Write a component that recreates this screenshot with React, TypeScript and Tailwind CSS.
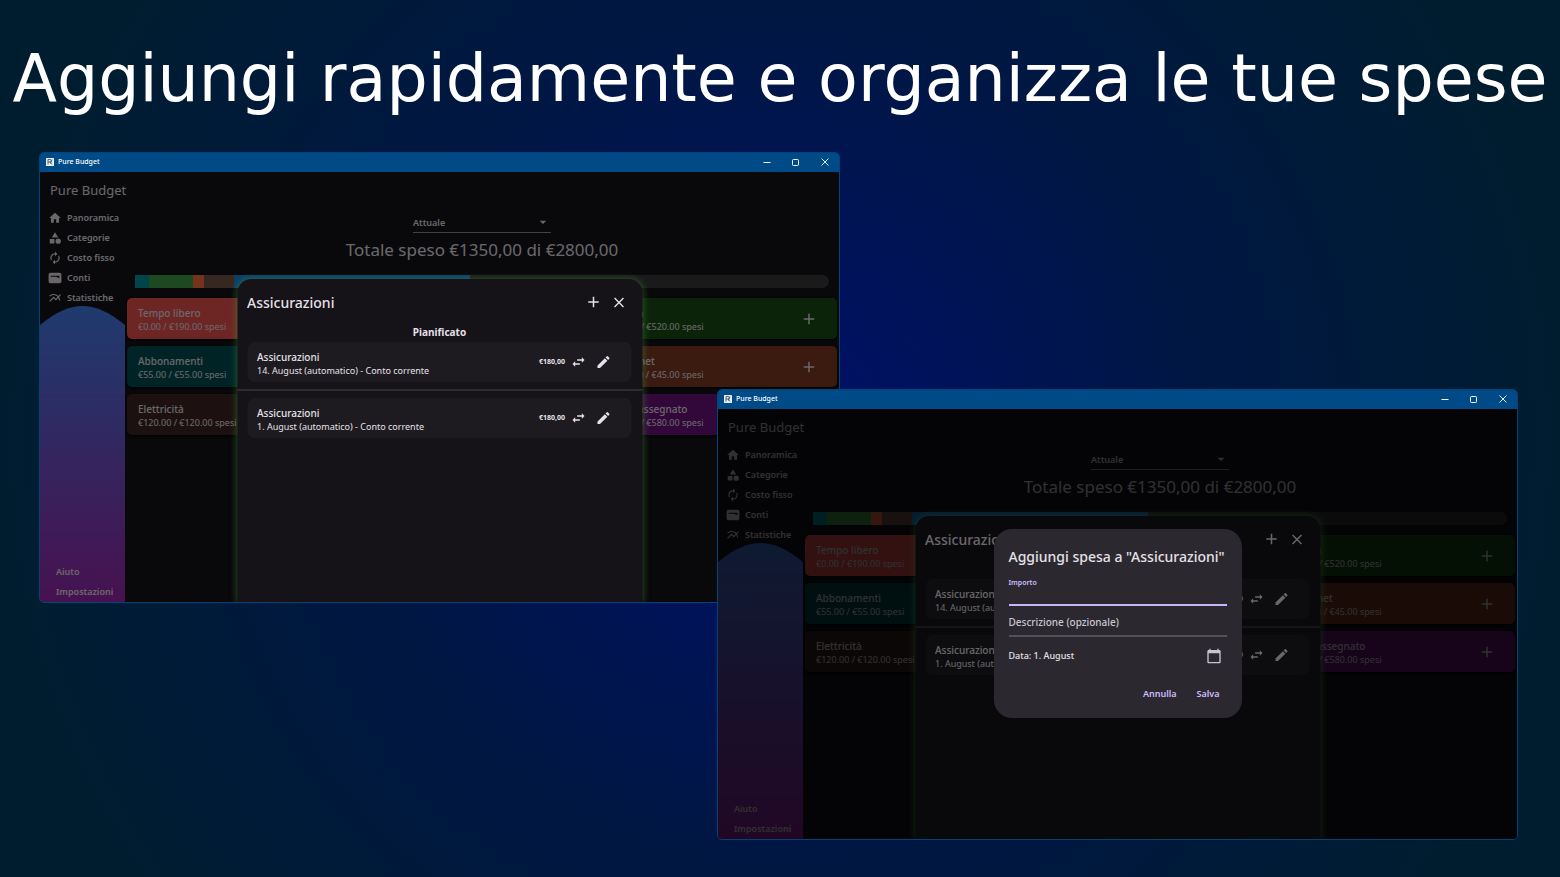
import type { ReactNode } from "react";
import { useId } from "react";
import {
  MdAdd,
  MdArrowDropDown,
  MdAutorenew,
  MdCalendarToday,
  MdCategory,
  MdClose,
  MdEdit,
  MdHome,
  MdMultilineChart,
  MdSwapHoriz,
} from "react-icons/md";

function AccountIcon({ className }: { className?: string }) {
  return (
    <svg viewBox="0 0 24 24" className={className} aria-hidden="true">
      <path
        fill="currentColor"
        fillRule="evenodd"
        d="M4 3h16a3 3 0 0 1 3 3v12a3 3 0 0 1-3 3H4a3 3 0 0 1-3-3V6a3 3 0 0 1 3-3ZM4.500 8v2h9.500l3 1.500h2.500V8Z"
      />
    </svg>
  );
}

const navItems = [
  { label: "Panoramica", Icon: MdHome },
  { label: "Categorie", Icon: MdCategory },
  { label: "Costo fisso", Icon: MdAutorenew },
  { label: "Conti", Icon: AccountIcon },
  { label: "Statistiche", Icon: MdMultilineChart },
];

const segments = [
  { color: "bg-[#0097a7]", width: 14 },
  { color: "bg-[#43a047]", width: 44 },
  { color: "bg-[#ff7043]", width: 11 },
  { color: "bg-[#795548]", width: 30 },
  { color: "bg-[#1e88e5]", width: 236 },
];
const barTotal = 694;

const leftCards = [
  { name: "Tempo libero", spent: "€0.00 / €190.00 spesi", color: "bg-[#ef5350]" },
  { name: "Abbonamenti", spent: "€55.00 / €55.00 spesi", color: "bg-[#005054]" },
  { name: "Elettricità", spent: "€120.00 / €120.00 spesi", color: "bg-[#3e2723]" },
];

const rightCards = [
  { name: "Spesa", spent: "€0.00 / €520.00 spesi", color: "bg-[#1a5014]" },
  { name: "Internet", spent: "€45.00 / €45.00 spesi", color: "bg-[#803a24]" },
  { name: "Non assegnato", spent: "€0.00 / €580.00 spesi", color: "bg-[#6e127e]" },
];

function AppLogo() {
  return (
    <svg viewBox="0 0 16 16" className="size-2" aria-hidden="true">
      <rect width="16" height="16" rx="1" fill="#e8eef4" />
      <path d="M4 3v10M4 3h4a2.500 2.500 0 0 1 0 5H4M8 8l4 5M12 3l-3 8" stroke="#33475c" strokeWidth="1.600" fill="none" />
    </svg>
  );
}

function TitleBar() {
  return (
    <div className="flex h-[19px] shrink-0 items-center gap-1 bg-[#004b87] pb-0.5 pl-1.5 text-white">
      <AppLogo />
      <span className="grow text-[7px] leading-none font-medium">Pure Budget</span>
      <button aria-label="Riduci a icona" className="flex h-full w-[29px] items-center justify-center">
        <svg viewBox="0 0 8 8" className="size-2" stroke="currentColor" fill="none"><path d="M.5 4.500h7" /></svg>
      </button>
      <button aria-label="Ingrandisci" className="-ml-1 flex h-full w-[29px] items-center justify-center">
        <svg viewBox="0 0 8 8" className="size-2" stroke="currentColor" fill="none"><rect x=".5" y="1.500" width="6" height="6" rx="1" /></svg>
      </button>
      <button aria-label="Chiudi" className="-ml-1 flex h-full w-[29px] items-center justify-center">
        <svg viewBox="0 0 8 8" className="size-2" stroke="currentColor" strokeWidth=".9" fill="none"><path d="M.5.500l7 7M7.500.500l-7 7" /></svg>
      </button>
    </div>
  );
}

function Sidebar() {
  const gradientId = useId();
  return (
    <aside className="flex w-[85px] shrink-0 flex-col">
      <nav className="flex flex-col">
        {navItems.map(({ label, Icon }) => (
          <a key={label} href="#" className="flex h-5 items-center gap-[5px] pl-2 text-[9px] font-semibold">
            <Icon className="size-[14px] shrink-0" />
            {label}
          </a>
        ))}
      </nav>
      <div className="relative -mt-0.5 flex grow flex-col justify-end">
        <svg viewBox="0 0 85 296" preserveAspectRatio="none" className="absolute inset-0 size-full" aria-hidden="true">
          <defs>
            <linearGradient id={gradientId} x1="0" y1="0" x2="0" y2="1">
              <stop offset="0" stopColor="#4480f0" />
              <stop offset="1" stopColor="#9c27b0" />
            </linearGradient>
          </defs>
          <path d="M0 19C16 6 29 0 42.500 0S69 6 85 19V296H0Z" fill={`url(#${gradientId})`} />
        </svg>
        <div className="relative flex flex-col pl-4 text-[9px] font-semibold">
          <a href="#" className="flex h-5 items-center">Aiuto</a>
          <a href="#" className="flex h-5 items-center">Impostazioni</a>
        </div>
      </div>
    </aside>
  );
}

function CategoryCard({ name, spent, color }: { name: string; spent: string; color: string }) {
  return (
    <article className={`flex h-[41px] items-center justify-between rounded-[5px] pr-[19px] pl-[11px] shadow-[0_1px_3px_#000] ${color}`}>
      <div className="pt-[3px]">
        <h3 className="text-[10px] leading-[14px] font-medium">{name}</h3>
        <p className="text-[9px] leading-[14px]">{spent}</p>
      </div>
      <button aria-label={`Aggiungi a ${name}`}><MdAdd className="size-[18px]" /></button>
    </article>
  );
}

function Overview() {
  const periodId = useId();
  return (
    <div className="flex grow flex-col text-[#e6e0e9]">
      <h2 className="flex h-9 shrink-0 items-center pt-0.5 pl-2.5 text-[13px]">Pure Budget</h2>
      <div className="flex grow">
        <Sidebar />
        <section className="flex grow flex-col pt-1.5">
          <label htmlFor={periodId} className="sr-only">Periodo</label>
          <div className="relative mx-auto w-[138px] border-b border-[#938f99]">
            <select id={periodId} className="block h-[18px] w-full appearance-none bg-transparent text-[9px] font-semibold outline-none">
              <option>Attuale</option>
            </select>
            <MdArrowDropDown className="pointer-events-none absolute top-0 right-0 size-4" />
          </div>
          <p className="mt-1.5 text-center text-[17px] leading-[22px]">Totale speso €1350,00 di €2800,00</p>
          <div className="mt-[14px] mr-2.5 ml-2.5 flex h-[13px] overflow-hidden rounded-r-full bg-[#3a393c]">
            {segments.map((s) => (
              <div key={s.color} className={s.color} style={{ width: `${(s.width / barTotal) * 100}%` }} />
            ))}
          </div>
          <div className="mt-2.5 mr-0.5 ml-0.5 grid grid-cols-3 gap-x-1.5">
            <div className="flex flex-col gap-[7px]">
              {leftCards.map((c) => <CategoryCard key={c.name} {...c} />)}
            </div>
            <div className="col-start-3 flex flex-col gap-[7px]">
              {rightCards.map((c) => <CategoryCard key={c.name} {...c} />)}
            </div>
          </div>
        </section>
      </div>
    </div>
  );
}

function Expense({ date }: { date: string }) {
  return (
    <li className="mr-[11px] ml-2.5 flex h-10 items-center rounded-[7px] bg-[#1d1b20] pr-5 pl-2.5">
      <div className="grow pt-[3px]">
        <h4 className="text-[10px] leading-[14px] font-medium">Assicurazioni</h4>
        <p className="text-[9px] leading-[14px]">{date} (automatico) - Conto corrente</p>
      </div>
      <span className="mr-[5px] text-[7px] font-bold">€180,00</span>
      <MdSwapHoriz className="mr-[9px] size-4" />
      <button aria-label="Modifica"><MdEdit className="size-4" /></button>
    </li>
  );
}

function ExpenseSheet() {
  return (
    <section className="absolute top-[107px] bottom-0 left-1/2 w-[405px] -translate-x-1/2 rounded-t-[14px] bg-[#151218] text-[#e6e0e9] shadow-[0_0_6px_1px_rgba(70,150,62,0.42)]">
      <header className="flex h-[46px] items-center gap-2 pr-[15px] pl-2.5">
        <h2 className="grow text-[14px] font-medium">Assicurazioni</h2>
        <button aria-label="Aggiungi"><MdAdd className="size-[18px]" /></button>
        <button aria-label="Chiudi"><MdClose className="size-[17px]" /></button>
      </header>
      <h3 className="h-[17px] text-center text-[10px] leading-[14px] font-bold">Pianificato</h3>
      <ul className="flex flex-col">
        <Expense date="14. August" />
        <li role="separator" className="mt-[7px] mb-[7px] h-0.5 bg-[#2e2c32]" />
        <Expense date="1. August" />
      </ul>
    </section>
  );
}

function AddExpenseDialog() {
  const amountId = useId();
  const noteId = useId();
  return (
    <div className="absolute inset-0 flex items-center justify-center bg-black/54 pb-0.5">
      <form role="dialog" aria-label="Aggiungi spesa" className="flex h-[189px] w-[248px] flex-col rounded-[18px] bg-[#2b292f] px-[15px] pt-[18px] text-[#e6e0e9]">
        <h2 className="text-[14px] leading-5 font-medium whitespace-nowrap">Aggiungi spesa a "Assicurazioni"</h2>
        <label htmlFor={amountId} className="mt-2.5 text-[7px] leading-3 font-semibold text-[#d0bcff]">Importo</label>
        <input id={amountId} className="h-[17px] border-b-2 border-[#c9b6f6] bg-transparent text-[10px] outline-none" />
        <input id={noteId} aria-label="Descrizione" placeholder="Descrizione (opzionale)" className="h-[31px] border-b-2 border-[#535157] bg-transparent pt-1 text-[10px] font-medium outline-none placeholder:text-[#cac4d0]" />
        <div className="mt-[9px] flex h-5 items-center justify-between pr-[5px]">
          <span className="text-[9px] font-medium">Data: 1. August</span>
          <button type="button" aria-label="Scegli data"><MdCalendarToday className="size-4 text-[#cac4d0]" /></button>
        </div>
        <div className="mt-[18px] flex h-5 items-center justify-end gap-5 pr-[7px] text-[9px] font-semibold text-[#d0bcff]">
          <button type="button">Annulla</button>
          <button type="button">Salva</button>
        </div>
      </form>
    </div>
  );
}

function AppWindow({ place, children }: { place: string; children?: ReactNode }) {
  return (
    <div className={`absolute flex h-[451px] w-[calc(50%+21px)] flex-col overflow-hidden rounded-[5px] border border-[#004478] bg-[#141218] ${place}`}>
      <TitleBar />
      <div className="relative flex grow flex-col overflow-hidden">
        <Overview />
        <div className="absolute inset-0 bg-black/54" />
        <ExpenseSheet />
        {children}
      </div>
    </div>
  );
}

export default function App() {
  return (
    <main className="relative min-h-screen overflow-hidden bg-[radial-gradient(circle_at_center,#00106a_0px,#001743_420px,#001d30_780px)] font-['Noto_Sans',sans-serif]">
      <h1 className="pt-[46px] text-center font-['DejaVu_Sans',sans-serif] text-[65px] leading-none whitespace-nowrap text-white">
        Aggiungi rapidamente e organizza le tue spese
      </h1>
      <AppWindow place="top-[152px] left-[39px]" />
      <AppWindow place="top-[389px] right-[42px]">
        <AddExpenseDialog />
      </AppWindow>
    </main>
  );
}
